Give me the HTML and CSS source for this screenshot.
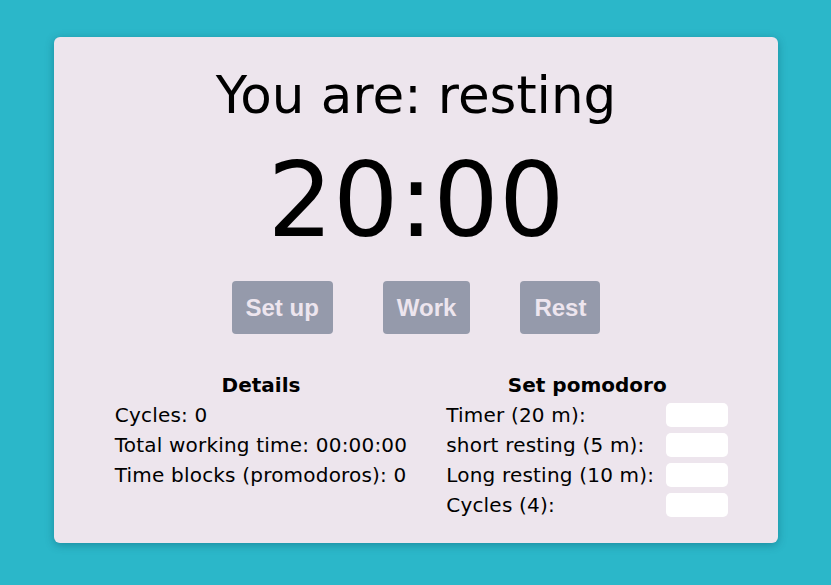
FILE: index.html
```html
<!DOCTYPE html>
<html>
<head>
<meta charset="utf-8">
<link rel="stylesheet" href="styles.css">
</head>
<body>
<div class="card">
  <h1 class="status">You are: resting</h1>
  <div class="timer">20:00</div>
  <div class="buttons">
    <button class="btn">Set up</button>
    <button class="btn">Work</button>
    <button class="btn">Rest</button>
  </div>
  <div class="panels">
    <div class="panel">
      <div class="panel-title">Details</div>
      <div class="line">Cycles: 0</div>
      <div class="line">Total working time: 00:00:00</div>
      <div class="line">Time blocks (promodoros): 0</div>
    </div>
    <div class="panel">
      <div class="panel-title">Set pomodoro</div>
      <div class="form">
        <label class="line">Timer (20 m):</label><input class="field" type="text">
        <label class="line">short resting (5 m):</label><input class="field" type="text">
        <label class="line">Long resting (10 m):</label><input class="field" type="text">
        <label class="line">Cycles (4):</label><input class="field" type="text">
      </div>
    </div>
  </div>
</div>
</body>
</html>
```

FILE: styles.css
```css
html, body {
  margin: 0;
  padding: 0;
}
body {
  background: #2bb7c9;
  font-family: "DejaVu Sans", Verdana, sans-serif;
  color: #000;
  height: 585px;
  overflow: hidden;
}
.card {
  width: 724px;
  height: 506px;
  box-sizing: border-box;
  margin: 37px 0 0 54px;
  background: #ede5ed;
  border-radius: 6px;
  box-shadow: 0 2px 8px rgba(0, 60, 80, 0.35);
  padding-top: 28px;
}
.status {
  margin: 0;
  font-weight: normal;
  font-size: 51.5px;
  line-height: 60px;
  text-align: center;
}
.timer {
  margin-top: 24px;
  font-size: 103px;
  line-height: 102px;
  text-align: center;
}
.buttons {
  display: flex;
  justify-content: center;
  gap: 50px;
  margin-top: 30px;
}
.btn {
  font-family: "Liberation Sans", Arial, sans-serif;
  font-weight: bold;
  font-size: 24px;
  line-height: 27px;
  padding: 13px 14px;
  border: none;
  border-radius: 4px;
  background: #959aab;
  color: #ede5ee;
  margin: 0;
}
.panels {
  display: flex;
  justify-content: center;
  gap: 39px;
  margin-top: 36px;
  padding-left: 11px;
}
.panel {
  font-size: 20px;
  line-height: 30px;
  letter-spacing: 0.2px;
}
.panel-title {
  font-weight: bold;
  text-align: center;
  letter-spacing: 0;
}
.form {
  display: grid;
  grid-template-columns: auto 62px;
  column-gap: 12px;
  align-items: center;
}
.field {
  width: 62px;
  height: 24px;
  box-sizing: border-box;
  border: none;
  border-radius: 5px;
  background: #fff;
  padding: 0;
  margin: 0;
}
```
